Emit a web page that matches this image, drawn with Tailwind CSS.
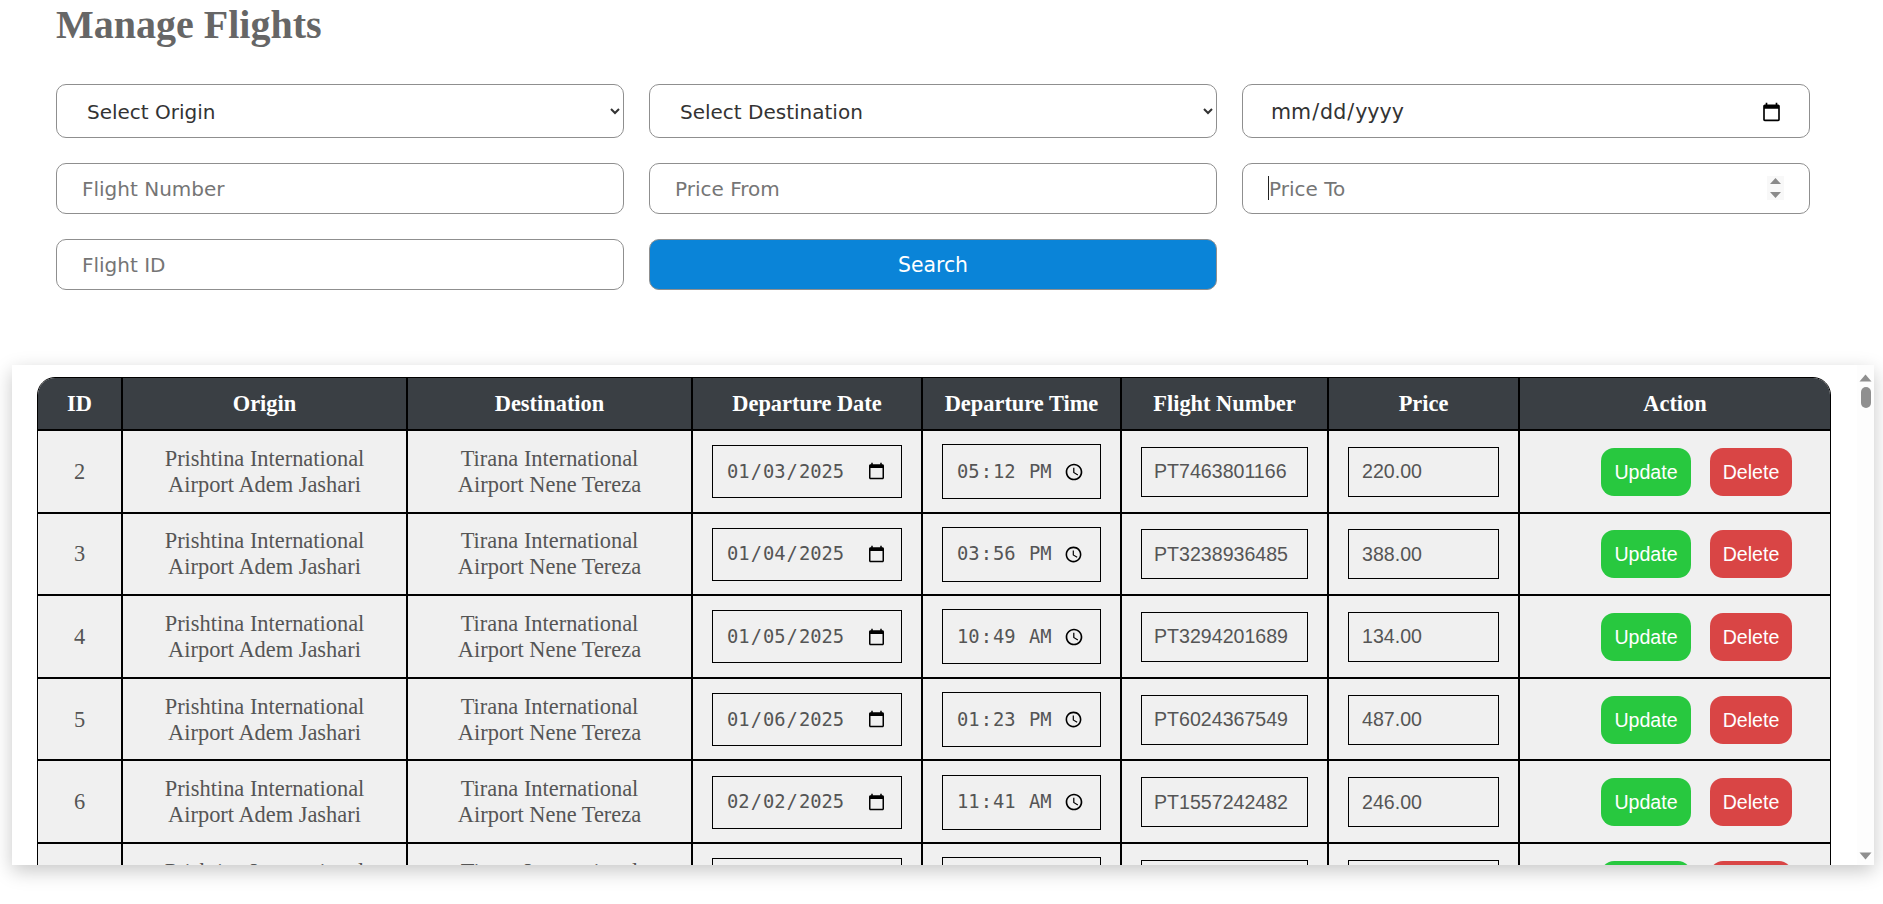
<!DOCTYPE html>
<html lang="en">
<head>
<meta charset="utf-8">
<title>Manage Flights</title>
<script src="https://cdn.jsdelivr.net/npm/@tailwindcss/browser@4"></script>
</head>
<body class="bg-white h-[904px] overflow-hidden font-['Liberation_Serif',serif]">
<main class="flex flex-col">
  <h1 class="ml-[56px] mt-[2px] h-[82px] text-[40px] leading-[46px] font-bold text-[#666]">Manage Flights</h1>

  <form class="ml-[56px] mr-[73px] grid grid-cols-3 gap-x-[25px] gap-y-[25px] font-['DejaVu_Sans',sans-serif] text-[20px] text-[#212529]">
    <select class="h-[54px] w-full rounded-[10px] border border-[#8f8f8f] bg-white pl-[26px] pr-[4px] pt-[2px] text-[20px] text-[#333]"><option>Select Origin</option></select>
    <select class="h-[54px] w-full rounded-[10px] border border-[#8f8f8f] bg-white pl-[26px] pr-[4px] pt-[2px] text-[20px] text-[#333]"><option>Select Destination</option></select>
    <input type="date" class="h-[54px] w-full rounded-[10px] border border-[#8f8f8f] bg-white pl-[27px] pr-[25px] pt-[2px] text-[20.6px] text-[#333]">

    <input type="text" placeholder="Flight Number" class="h-[51px] w-full rounded-[10px] border border-[#8f8f8f] bg-white pl-[25px] pr-[25px] text-[20px] placeholder:text-[#757575]">
    <input type="number" placeholder="Price From" class="h-[51px] w-full rounded-[10px] border border-[#8f8f8f] bg-white pl-[25px] pr-[25px] text-[20px] placeholder:text-[#757575]">
    <div class="relative h-[51px]">
      <input type="number" placeholder="Price To" class="h-[51px] w-full rounded-[10px] border border-[#8f8f8f] bg-white pl-[26px] pr-[25px] text-[20px] placeholder:text-[#757575]">
      <span class="absolute left-[26px] top-[13px] h-[24px] w-px bg-[#222]"></span>
      <svg class="absolute left-[525px] top-[13px]" width="17" height="24" viewBox="0 0 17 24"><rect width="17" height="24" fill="#f8f8f8"/><path d="M3 8 8.5 2 14 8Z M3 16 8.5 22 14 16Z" fill="#8a8a8a"/></svg>
    </div>

    <input type="text" placeholder="Flight ID" class="h-[51px] w-full rounded-[10px] border border-[#8f8f8f] bg-white pl-[25px] pr-[25px] text-[20px] placeholder:text-[#757575]">
    <button type="button" class="h-[51px] w-full rounded-[10px] border border-[#8f8f8f] bg-[#0a84d8] pt-[1px] text-[20.4px] text-white">Search</button>
  </form>

  <section class="ml-[12px] mr-[9px] mt-[75px] flex h-[500px] overflow-hidden bg-white shadow-[0_6px_18px_rgba(0,0,0,0.22)]">
    <div class="min-w-0 flex-1 overflow-hidden pl-[25px] pr-[26px] pt-[12px]">
      <div class="overflow-hidden rounded-t-[18px] border border-black">
        <table class="w-[1792px] table-fixed border-separate border-spacing-0 text-center text-[22.4px] leading-[26px] text-[#555]
          [&_th]:h-[53px] [&_th]:border-r-2 [&_th]:border-b-2 [&_th]:border-black [&_th]:bg-[#3a3f44] [&_th]:text-[22.4px] [&_th]:font-bold [&_th]:text-white [&_th:last-child]:border-r-0
          [&_td]:h-[82.6px] [&_td]:border-r-2 [&_td]:border-b-2 [&_td]:border-black [&_td]:bg-[#f0f0f0] [&_td]:pt-[1px] [&_td]:align-middle [&_td:last-child]:border-r-0
          [&_.d]:h-[53px] [&_.d]:w-[190px] [&_.d]:border [&_.d]:border-black [&_.d]:bg-transparent [&_.d]:pl-[13px] [&_.d]:pr-[13px] [&_.d]:font-['DejaVu_Sans_Mono',monospace] [&_.d]:text-[18.8px]
          [&_.t]:h-[55px] [&_.t]:w-[159px] [&_.t]:border [&_.t]:border-black [&_.t]:bg-transparent [&_.t]:pl-[13px] [&_.t]:pr-[13px] [&_.t]:font-['DejaVu_Sans_Mono',monospace] [&_.t]:text-[18.8px]
          [&_.n]:h-[50px] [&_.n]:w-[167px] [&_.n]:border [&_.n]:border-black [&_.n]:bg-transparent [&_.n]:pl-[12px] [&_.n]:font-['Liberation_Sans',sans-serif] [&_.n]:text-[19.6px]
          [&_.p]:h-[50px] [&_.p]:w-[151px] [&_.p]:border [&_.p]:border-black [&_.p]:bg-transparent [&_.p]:pl-[13px] [&_.p]:font-['Liberation_Sans',sans-serif] [&_.p]:text-[19.6px]
          [&_.u]:h-[48px] [&_.u]:w-[90px] [&_.u]:rounded-[13px] [&_.u]:bg-[#28c83f] [&_.u]:font-['Liberation_Sans',sans-serif] [&_.u]:text-[19.6px] [&_.u]:text-white
          [&_.x]:ml-[19px] [&_.x]:h-[48px] [&_.x]:w-[82px] [&_.x]:rounded-[13px] [&_.x]:bg-[#d94545] [&_.x]:font-['Liberation_Sans',sans-serif] [&_.x]:text-[19.6px] [&_.x]:text-white">
          <colgroup>
            <col class="w-[85px]"><col class="w-[285px]"><col class="w-[285px]"><col class="w-[230px]"><col class="w-[199px]"><col class="w-[207px]"><col class="w-[191px]"><col>
          </colgroup>
          <thead>
            <tr><th>ID</th><th>Origin</th><th>Destination</th><th>Departure Date</th><th>Departure Time</th><th>Flight Number</th><th>Price</th><th>Action</th></tr>
          </thead>
          <tbody>
            <tr>
              <td>2</td><td>Prishtina International<br>Airport Adem Jashari</td><td>Tirana International<br>Airport Nene Tereza</td>
              <td><input class="d" type="date" value="2025-01-03"></td><td><input class="t" type="time" value="17:12"></td>
              <td><input class="n" type="text" value="PT7463801166"></td><td><input class="p" type="text" value="220.00"></td>
              <td class="pl-[81px] text-left"><button class="u">Update</button><button class="x">Delete</button></td>
            </tr>
            <tr>
              <td>3</td><td>Prishtina International<br>Airport Adem Jashari</td><td>Tirana International<br>Airport Nene Tereza</td>
              <td><input class="d" type="date" value="2025-01-04"></td><td><input class="t" type="time" value="15:56"></td>
              <td><input class="n" type="text" value="PT3238936485"></td><td><input class="p" type="text" value="388.00"></td>
              <td class="pl-[81px] text-left"><button class="u">Update</button><button class="x">Delete</button></td>
            </tr>
            <tr>
              <td>4</td><td>Prishtina International<br>Airport Adem Jashari</td><td>Tirana International<br>Airport Nene Tereza</td>
              <td><input class="d" type="date" value="2025-01-05"></td><td><input class="t" type="time" value="10:49"></td>
              <td><input class="n" type="text" value="PT3294201689"></td><td><input class="p" type="text" value="134.00"></td>
              <td class="pl-[81px] text-left"><button class="u">Update</button><button class="x">Delete</button></td>
            </tr>
            <tr>
              <td>5</td><td>Prishtina International<br>Airport Adem Jashari</td><td>Tirana International<br>Airport Nene Tereza</td>
              <td><input class="d" type="date" value="2025-01-06"></td><td><input class="t" type="time" value="13:23"></td>
              <td><input class="n" type="text" value="PT6024367549"></td><td><input class="p" type="text" value="487.00"></td>
              <td class="pl-[81px] text-left"><button class="u">Update</button><button class="x">Delete</button></td>
            </tr>
            <tr>
              <td>6</td><td>Prishtina International<br>Airport Adem Jashari</td><td>Tirana International<br>Airport Nene Tereza</td>
              <td><input class="d" type="date" value="2025-02-02"></td><td><input class="t" type="time" value="11:41"></td>
              <td><input class="n" type="text" value="PT1557242482"></td><td><input class="p" type="text" value="246.00"></td>
              <td class="pl-[81px] text-left"><button class="u">Update</button><button class="x">Delete</button></td>
            </tr>
            <tr>
              <td>7</td><td>Prishtina International<br>Airport Adem Jashari</td><td>Tirana International<br>Airport Nene Tereza</td>
              <td><input class="d" type="date" value="2025-02-03"></td><td><input class="t" type="time" value="09:15"></td>
              <td><input class="n" type="text" value="PT1557242483"></td><td><input class="p" type="text" value="310.00"></td>
              <td class="pl-[81px] text-left"><button class="u">Update</button><button class="x">Delete</button></td>
            </tr>
          </tbody>
        </table>
      </div>
    </div>
    <div class="flex w-[17px] shrink-0 flex-col items-center bg-[#fdfdfd] pt-[9px] pb-[5px]">
      <svg width="13" height="8" viewBox="0 0 13 8"><path d="M0.5 7.5 6.5 0.5 12.5 7.5Z" fill="#8f8f8f"/></svg>
      <div class="mt-[5px] h-[21px] w-[10px] rounded-full bg-[#8f8f8f]"></div>
      <svg class="mt-auto" width="13" height="8" viewBox="0 0 13 8"><path d="M0.5 0.5 6.5 7.5 12.5 0.5Z" fill="#8f8f8f"/></svg>
    </div>
  </section>
</main>
</body>
</html>
